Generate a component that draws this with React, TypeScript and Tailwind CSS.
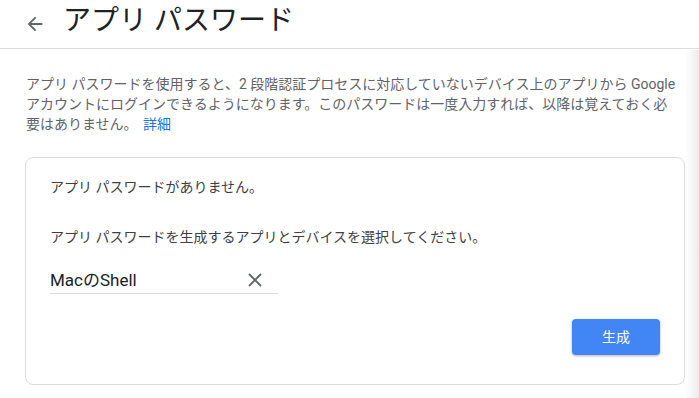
import { useState } from 'react'

const FONT = { fontFamily: 'Roboto, "Noto Sans CJK JP", "Noto Sans", sans-serif' }

export default function App() {
  const [value, setValue] = useState('MacのShell')

  return (
    <div className="relative w-[699px] h-[398px] overflow-hidden bg-white" style={FONT}>
      {/* Header */}
      <div className="h-[49px] flex items-center border-b border-[#dadce0]">
        <button className="ml-[23px] w-[24px] h-[24px] flex items-center justify-center text-[#5f6368]">
          <svg width="22" height="22" viewBox="0 0 24 24" fill="currentColor">
            <path d="M20 11H7.83l5.59-5.59L12 4l-8 8 8 8 1.41-1.41L7.83 13H20v-2z" />
          </svg>
        </button>
        <h1 className="ml-[16px] -mt-[6px] text-[28px] leading-[36px] text-[#202124] font-normal">
          アプリ パスワード
        </h1>
      </div>

      {/* Description */}
      <p className="pt-[25px] pl-[26px] text-[14px] leading-[20px] text-[#5f6368] whitespace-nowrap">
        アプリ パスワードを使用すると、2 段階認証プロセスに対応していないデバイス上のアプリから Google
        <br />
        アカウントにログインできるようになります。このパスワードは一度入力すれば、以降は覚えておく必
        <br />
        要はありません。 <a className="text-[#1a73e8] ml-[2px]">詳細</a>
      </p>

      {/* Card */}
      <div className="mt-[23px] ml-[25px] w-[660px] border border-[#dadce0] rounded-[8px] pt-[19px] pb-[29px] px-[24px]">
        <p className="text-[14px] leading-[20px] text-[#3c4043]">アプリ パスワードがありません。</p>
        <p className="mt-[30px] text-[14px] leading-[20px] text-[#3c4043]">
          アプリ パスワードを生成するアプリとデバイスを選択してください。
        </p>
        <div className="mt-[20px] w-[228px] h-[27px] flex items-center border-b border-[#dadce0]">
          <input
            value={value}
            onChange={(e) => setValue(e.target.value)}
            className="flex-1 min-w-0 text-[17px] leading-[26px] text-[#202124] outline-none bg-transparent"
            style={FONT}
          />
          <button onClick={() => setValue('')} className="mr-[15px] text-[#5f6368]">
            <svg width="16" height="16" viewBox="0 0 16 16" stroke="currentColor" strokeWidth="1.8" fill="none">
              <path d="M2 2l12 12M14 2L2 14" />
            </svg>
          </button>
        </div>
        <div className="mt-[25px] flex justify-end">
          <button className="w-[88px] h-[36px] rounded-[4px] bg-[#4285f4] text-white text-[14px] shadow-[0_1px_3px_rgba(0,0,0,0.3)]">
            生成
          </button>
        </div>
      </div>

      {/* right edge shade */}
      <div className="absolute right-0 top-[50px] bottom-0 w-[14px] bg-gradient-to-r from-white to-[#ececec]" />
    </div>
  )
}
